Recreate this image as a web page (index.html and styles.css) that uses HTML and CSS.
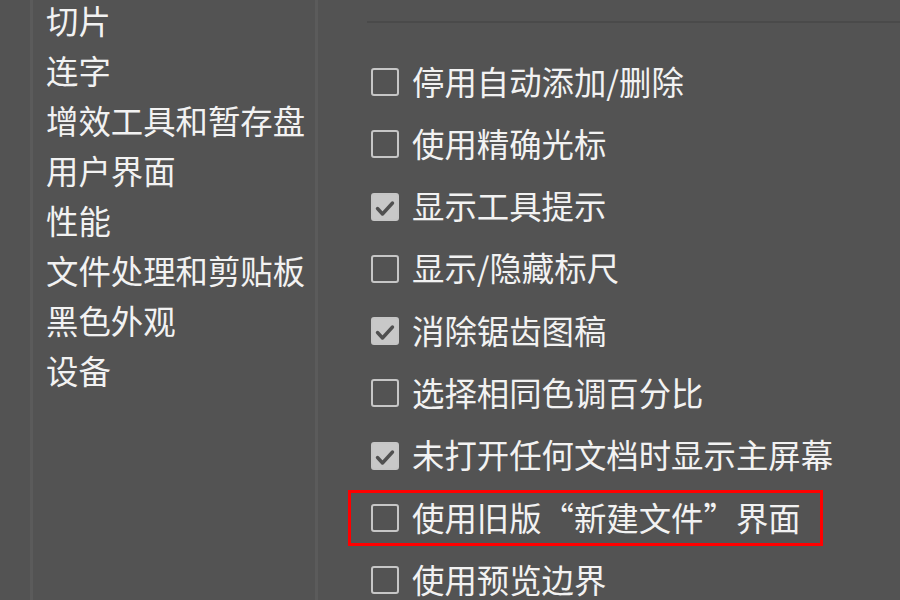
FILE: index.html
```html
<!DOCTYPE html>
<html lang="zh-CN">
<head>
    <meta charset="UTF-8">
    <meta name="viewport" content="width=device-width, initial-scale=1.0">
    <title>首选项 - 常规</title>
    <link rel="stylesheet" href="styles.css">
</head>
<body>
    <div class="sidebar">
        <ul class="nav-list">
            <li>切片</li>
            <li>连字</li>
            <li>增效工具和暂存盘</li>
            <li>用户界面</li>
            <li>性能</li>
            <li>文件处理和剪贴板</li>
            <li>黑色外观</li>
            <li>设备</li>
        </ul>
    </div>
    <div class="options">
        <div class="divider"></div>
        <ul class="option-list">
            <li class="option"><span class="box"></span><span class="label">停用自动添加/删除</span></li>
            <li class="option"><span class="box"></span><span class="label">使用精确光标</span></li>
            <li class="option"><span class="box checked"><svg viewBox="0 0 28 28"><path d="M6.5 15.5 L11.5 21 L21.5 10"/></svg></span><span class="label">显示工具提示</span></li>
            <li class="option"><span class="box"></span><span class="label">显示/隐藏标尺</span></li>
            <li class="option"><span class="box checked"><svg viewBox="0 0 28 28"><path d="M6.5 15.5 L11.5 21 L21.5 10"/></svg></span><span class="label">消除锯齿图稿</span></li>
            <li class="option"><span class="box"></span><span class="label">选择相同色调百分比</span></li>
            <li class="option"><span class="box checked"><svg viewBox="0 0 28 28"><path d="M6.5 15.5 L11.5 21 L21.5 10"/></svg></span><span class="label">未打开任何文档时显示主屏幕</span></li>
            <li class="option highlight"><span class="box"></span><span class="label">使用旧版“新建文件”界面</span></li>
            <li class="option"><span class="box"></span><span class="label">使用预览边界</span></li>
        </ul>
    </div>
</body>
</html>
```

FILE: styles.css
```css
/* Základ */
* {
    margin: 0;
    padding: 0;
    box-sizing: border-box;
}
body {
    font-family: "Noto Sans CJK SC", "Noto Sans", sans-serif;
    background-color: #535353;
    color: #f2f2f2;
    display: flex;
    height: 100vh;
    overflow: hidden;
}
ul {
    list-style: none;
}

/* Levý seznam */
.sidebar {
    margin-left: 30px;
    width: 288px;
    height: 100%;
    border-left: 3px solid #5b5b5b;
    border-right: 3px solid #5b5b5b;
    padding-left: 13px;
    flex-shrink: 0;
}
.nav-list {
    margin-top: -5px;
}
.nav-list li {
    font-size: 32.4px;
    line-height: 50px;
    white-space: nowrap;
}

/* Pravá část */
.options {
    flex: 1;
}
.divider {
    margin-top: 21px;
    margin-left: 49px;
    height: 2px;
    background-color: #4a4a4a;
}
.option-list {
    margin-top: 31px;
    margin-left: 30px;
    display: flex;
    flex-direction: column;
    gap: 6.3px;
}
.option {
    display: flex;
    align-items: center;
    width: fit-content;
    height: 56px;
    padding: 0 19px 0 20px;
    border: 3px solid transparent;
}
.option.highlight {
    border-color: #ff0000;
}
.box {
    width: 28px;
    height: 28px;
    border: 2px solid #c6c6c6;
    border-radius: 3px;
    margin-right: 13px;
    flex-shrink: 0;
    display: flex;
}
.box.checked {
    background-color: #c8c8c8;
}
.box svg {
    width: 28px;
    height: 28px;
    margin: -2px;
    fill: none;
    stroke: #505050;
    stroke-width: 3.4;
    stroke-linecap: round;
    stroke-linejoin: round;
}
.label {
    font-size: 32.4px;
    line-height: 40px;
    padding-bottom: 3px;
    white-space: nowrap;
}
```
